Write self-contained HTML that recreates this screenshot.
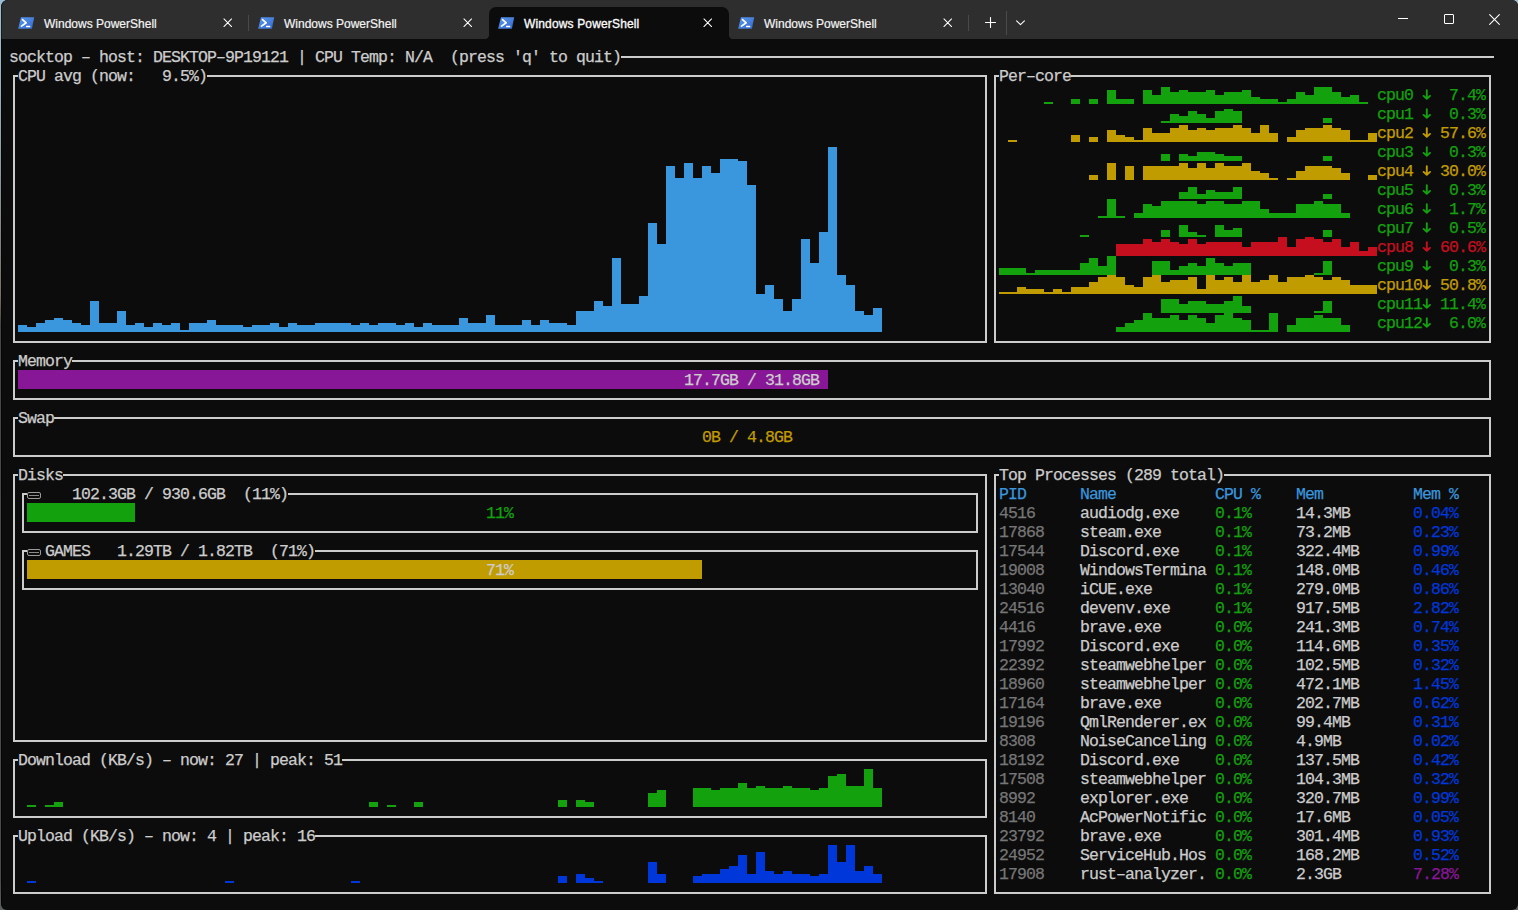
<!DOCTYPE html>
<html><head><meta charset="utf-8"><style>
html,body{margin:0;padding:0;width:1518px;height:910px;overflow:hidden;position:relative}
body{background:linear-gradient(#98bdd2 0,#96b8c9 60px,#8fa0a8 150px,#7a7068 295px,#4a4543 325px,#4a4a4a 500px,#4a4a4a 880px,#5a605e 910px)}
#win{position:absolute;left:1px;top:0;width:1517px;height:910px;background:#0c0c0c;border-radius:7px 6px 6px 6px;overflow:hidden;border-left:1px solid #050505;box-sizing:border-box}
#cornerTR{position:absolute;left:1508px;top:0;width:10px;height:10px;background:radial-gradient(circle at 0 100%, transparent 0, transparent 6px, #a3c3d3 6.5px)}
.t{position:absolute;font-family:"Liberation Mono",monospace;font-size:16.5px;letter-spacing:-0.9px;-webkit-text-stroke:0.25px currentColor;line-height:19px;white-space:pre;height:19px}
.r{position:absolute}
.b{position:absolute;border:2px solid #cccccc}
.ic{position:absolute}
.tt{position:absolute;top:16px;font-family:"Liberation Sans",sans-serif;font-size:12px;line-height:16px;color:#f4f4f4;white-space:pre;-webkit-text-stroke:0.2px #f4f4f4}
.dk{position:absolute;width:12px;height:5px;border:1px solid #9a9a9a;border-radius:2px}
.dk div{position:absolute;left:1px;top:2px;width:10px;height:1px;background:#8a8a8a}
#tabbar{position:absolute;left:0;top:0;width:1518px;height:39px}
#tabbg{position:absolute;left:1px;top:0;width:1517px;height:39px;background:#2e2e2e;border-radius:7px 6px 0 0;border-left:1px solid #1a1a1a;box-sizing:border-box}
#active{position:absolute;left:489px;top:7px;width:240px;height:32px;background:#0c0c0c;border-radius:7px 7px 0 0}
.sep{position:absolute;width:1px;background:#4a4a4a}
#edgeL{position:absolute;left:0;top:0;width:1px;height:910px;background:linear-gradient(#9bbccf,#8fa5b0 40%,#9a9a95 80%,#7a7a7a)}
</style></head><body>
<div id="win"></div>
<div id="tabbg"></div>
<div id="tabbar">
<div id="active"></div>
<div class="r" style="left:485px;top:35px;width:4px;height:4px;background:radial-gradient(circle at 0 0,#2e2e2e 3.6px,#0c0c0c 4.4px)"></div>
<div class="r" style="left:729px;top:35px;width:4px;height:4px;background:radial-gradient(circle at 100% 0,#2e2e2e 3.6px,#0c0c0c 4.4px)"></div>
<div class="sep" style="left:248px;top:15px;height:16px"></div>
<div class="sep" style="left:968px;top:15px;height:16px"></div>
<div class="sep" style="left:1006px;top:11px;height:24px"></div>
<svg class="ic" style="left:18px;top:17px" width="17" height="13" viewBox="0 0 17 13">
<defs><linearGradient id="g18" x1="0" y1="0" x2="1" y2="1"><stop offset="0" stop-color="#5b9af0"/><stop offset="1" stop-color="#3568cc"/></linearGradient></defs>
<path d="M3.0 0.2 H16.2 L13.9 11.8 H0.1 Z" fill="url(#g18)"/>
<path d="M4.5 2.7 L8.2 5.8 L3.5 9.1" stroke="#fff" stroke-width="1.7" fill="none" stroke-linecap="round" stroke-linejoin="round"/>
<rect x="8.0" y="8.7" width="4.3" height="1.5" rx="0.5" fill="#fff"/>
</svg>
<div class="tt" style="left:44px">Windows PowerShell</div>
<svg class="ic" style="left:223px;top:18px" width="9.5" height="9.5" viewBox="0 0 10 10"><path d="M1.0 1.0 L9.0 9.0 M9.0 1.0 L1.0 9.0" stroke="#ffffff" stroke-width="1.1" stroke-linecap="round"/></svg>
<svg class="ic" style="left:258px;top:17px" width="17" height="13" viewBox="0 0 17 13">
<defs><linearGradient id="g258" x1="0" y1="0" x2="1" y2="1"><stop offset="0" stop-color="#5b9af0"/><stop offset="1" stop-color="#3568cc"/></linearGradient></defs>
<path d="M3.0 0.2 H16.2 L13.9 11.8 H0.1 Z" fill="url(#g258)"/>
<path d="M4.5 2.7 L8.2 5.8 L3.5 9.1" stroke="#fff" stroke-width="1.7" fill="none" stroke-linecap="round" stroke-linejoin="round"/>
<rect x="8.0" y="8.7" width="4.3" height="1.5" rx="0.5" fill="#fff"/>
</svg>
<div class="tt" style="left:284px">Windows PowerShell</div>
<svg class="ic" style="left:463px;top:18px" width="9.5" height="9.5" viewBox="0 0 10 10"><path d="M1.0 1.0 L9.0 9.0 M9.0 1.0 L1.0 9.0" stroke="#ffffff" stroke-width="1.1" stroke-linecap="round"/></svg>
<svg class="ic" style="left:498px;top:17px" width="17" height="13" viewBox="0 0 17 13">
<defs><linearGradient id="g498" x1="0" y1="0" x2="1" y2="1"><stop offset="0" stop-color="#5b9af0"/><stop offset="1" stop-color="#3568cc"/></linearGradient></defs>
<path d="M3.0 0.2 H16.2 L13.9 11.8 H0.1 Z" fill="url(#g498)"/>
<path d="M4.5 2.7 L8.2 5.8 L3.5 9.1" stroke="#fff" stroke-width="1.7" fill="none" stroke-linecap="round" stroke-linejoin="round"/>
<rect x="8.0" y="8.7" width="4.3" height="1.5" rx="0.5" fill="#fff"/>
</svg>
<div class="tt" style="left:524px;-webkit-text-stroke:0.35px #fff;letter-spacing:0.15px">Windows PowerShell</div>
<svg class="ic" style="left:703px;top:18px" width="9.5" height="9.5" viewBox="0 0 10 10"><path d="M1.0 1.0 L9.0 9.0 M9.0 1.0 L1.0 9.0" stroke="#ffffff" stroke-width="1.1" stroke-linecap="round"/></svg>
<svg class="ic" style="left:738px;top:17px" width="17" height="13" viewBox="0 0 17 13">
<defs><linearGradient id="g738" x1="0" y1="0" x2="1" y2="1"><stop offset="0" stop-color="#5b9af0"/><stop offset="1" stop-color="#3568cc"/></linearGradient></defs>
<path d="M3.0 0.2 H16.2 L13.9 11.8 H0.1 Z" fill="url(#g738)"/>
<path d="M4.5 2.7 L8.2 5.8 L3.5 9.1" stroke="#fff" stroke-width="1.7" fill="none" stroke-linecap="round" stroke-linejoin="round"/>
<rect x="8.0" y="8.7" width="4.3" height="1.5" rx="0.5" fill="#fff"/>
</svg>
<div class="tt" style="left:764px">Windows PowerShell</div>
<svg class="ic" style="left:943px;top:18px" width="9.5" height="9.5" viewBox="0 0 10 10"><path d="M1.0 1.0 L9.0 9.0 M9.0 1.0 L1.0 9.0" stroke="#ffffff" stroke-width="1.1" stroke-linecap="round"/></svg>
<svg class="ic" style="left:985px;top:17px" width="11" height="11" viewBox="0 0 11 11"><path d="M5.5 0.5 V10.5 M0.5 5.5 H10.5" stroke="#fff" stroke-width="1.1" stroke-linecap="round"/></svg>
<svg class="ic" style="left:1016px;top:20px" width="9" height="6" viewBox="0 0 9 6"><path d="M0.6 0.8 L4.5 4.6 L8.4 0.8" stroke="#fff" stroke-width="1.1" fill="none" stroke-linecap="round" stroke-linejoin="round"/></svg>
<div class="r" style="left:1398px;top:18px;width:10px;height:1px;background:#fff"></div>
<div class="r" style="left:1444px;top:14px;width:8px;height:8px;border:1px solid #fff;border-radius:1px"></div>
<svg class="ic" style="left:1489px;top:14px" width="11" height="11" viewBox="0 0 10 10"><path d="M0.6 0.6 L9.4 9.4 M9.4 0.6 L0.6 9.4" stroke="#fff" stroke-width="1.0" stroke-linecap="round"/></svg>
</div>
<div id="term">
<div class="t" style="left:9px;top:48px;color:#cccccc">socktop – host: DESKTOP–9P19121 | CPU Temp: N/A  (press 'q' to quit)</div>
<div class="r" style="left:621px;top:56px;width:873px;height:2px;background:#cccccc"></div>
<div class="b" style="left:13px;top:75px;width:970px;height:264px"></div>
<div class="r" style="left:18px;top:325px;width:9px;height:7px;background:#3a96dd"></div>
<div class="r" style="left:27px;top:327px;width:9px;height:5px;background:#3a96dd"></div>
<div class="r" style="left:36px;top:323px;width:9px;height:9px;background:#3a96dd"></div>
<div class="r" style="left:45px;top:320px;width:9px;height:12px;background:#3a96dd"></div>
<div class="r" style="left:54px;top:318px;width:9px;height:14px;background:#3a96dd"></div>
<div class="r" style="left:63px;top:320px;width:9px;height:12px;background:#3a96dd"></div>
<div class="r" style="left:72px;top:323px;width:9px;height:9px;background:#3a96dd"></div>
<div class="r" style="left:81px;top:325px;width:9px;height:7px;background:#3a96dd"></div>
<div class="r" style="left:90px;top:301px;width:9px;height:31px;background:#3a96dd"></div>
<div class="r" style="left:99px;top:323px;width:9px;height:9px;background:#3a96dd"></div>
<div class="r" style="left:108px;top:323px;width:9px;height:9px;background:#3a96dd"></div>
<div class="r" style="left:117px;top:311px;width:9px;height:21px;background:#3a96dd"></div>
<div class="r" style="left:126px;top:325px;width:9px;height:7px;background:#3a96dd"></div>
<div class="r" style="left:135px;top:323px;width:9px;height:9px;background:#3a96dd"></div>
<div class="r" style="left:144px;top:327px;width:9px;height:5px;background:#3a96dd"></div>
<div class="r" style="left:153px;top:323px;width:9px;height:9px;background:#3a96dd"></div>
<div class="r" style="left:162px;top:325px;width:9px;height:7px;background:#3a96dd"></div>
<div class="r" style="left:171px;top:323px;width:9px;height:9px;background:#3a96dd"></div>
<div class="r" style="left:180px;top:330px;width:9px;height:2px;background:#3a96dd"></div>
<div class="r" style="left:189px;top:323px;width:9px;height:9px;background:#3a96dd"></div>
<div class="r" style="left:198px;top:323px;width:9px;height:9px;background:#3a96dd"></div>
<div class="r" style="left:207px;top:320px;width:9px;height:12px;background:#3a96dd"></div>
<div class="r" style="left:216px;top:325px;width:9px;height:7px;background:#3a96dd"></div>
<div class="r" style="left:225px;top:325px;width:9px;height:7px;background:#3a96dd"></div>
<div class="r" style="left:234px;top:325px;width:9px;height:7px;background:#3a96dd"></div>
<div class="r" style="left:243px;top:327px;width:9px;height:5px;background:#3a96dd"></div>
<div class="r" style="left:252px;top:325px;width:9px;height:7px;background:#3a96dd"></div>
<div class="r" style="left:261px;top:325px;width:9px;height:7px;background:#3a96dd"></div>
<div class="r" style="left:270px;top:323px;width:9px;height:9px;background:#3a96dd"></div>
<div class="r" style="left:279px;top:327px;width:9px;height:5px;background:#3a96dd"></div>
<div class="r" style="left:288px;top:323px;width:9px;height:9px;background:#3a96dd"></div>
<div class="r" style="left:297px;top:325px;width:9px;height:7px;background:#3a96dd"></div>
<div class="r" style="left:306px;top:325px;width:9px;height:7px;background:#3a96dd"></div>
<div class="r" style="left:315px;top:323px;width:9px;height:9px;background:#3a96dd"></div>
<div class="r" style="left:324px;top:323px;width:9px;height:9px;background:#3a96dd"></div>
<div class="r" style="left:333px;top:323px;width:9px;height:9px;background:#3a96dd"></div>
<div class="r" style="left:342px;top:323px;width:9px;height:9px;background:#3a96dd"></div>
<div class="r" style="left:351px;top:325px;width:9px;height:7px;background:#3a96dd"></div>
<div class="r" style="left:360px;top:323px;width:9px;height:9px;background:#3a96dd"></div>
<div class="r" style="left:369px;top:325px;width:9px;height:7px;background:#3a96dd"></div>
<div class="r" style="left:378px;top:323px;width:9px;height:9px;background:#3a96dd"></div>
<div class="r" style="left:387px;top:323px;width:9px;height:9px;background:#3a96dd"></div>
<div class="r" style="left:396px;top:325px;width:9px;height:7px;background:#3a96dd"></div>
<div class="r" style="left:405px;top:323px;width:9px;height:9px;background:#3a96dd"></div>
<div class="r" style="left:414px;top:327px;width:9px;height:5px;background:#3a96dd"></div>
<div class="r" style="left:423px;top:323px;width:9px;height:9px;background:#3a96dd"></div>
<div class="r" style="left:432px;top:325px;width:9px;height:7px;background:#3a96dd"></div>
<div class="r" style="left:441px;top:325px;width:9px;height:7px;background:#3a96dd"></div>
<div class="r" style="left:450px;top:325px;width:9px;height:7px;background:#3a96dd"></div>
<div class="r" style="left:459px;top:318px;width:9px;height:14px;background:#3a96dd"></div>
<div class="r" style="left:468px;top:323px;width:9px;height:9px;background:#3a96dd"></div>
<div class="r" style="left:477px;top:323px;width:9px;height:9px;background:#3a96dd"></div>
<div class="r" style="left:486px;top:315px;width:9px;height:17px;background:#3a96dd"></div>
<div class="r" style="left:495px;top:325px;width:9px;height:7px;background:#3a96dd"></div>
<div class="r" style="left:504px;top:325px;width:9px;height:7px;background:#3a96dd"></div>
<div class="r" style="left:513px;top:325px;width:9px;height:7px;background:#3a96dd"></div>
<div class="r" style="left:522px;top:320px;width:9px;height:12px;background:#3a96dd"></div>
<div class="r" style="left:531px;top:325px;width:9px;height:7px;background:#3a96dd"></div>
<div class="r" style="left:540px;top:320px;width:9px;height:12px;background:#3a96dd"></div>
<div class="r" style="left:549px;top:323px;width:9px;height:9px;background:#3a96dd"></div>
<div class="r" style="left:558px;top:323px;width:9px;height:9px;background:#3a96dd"></div>
<div class="r" style="left:567px;top:325px;width:9px;height:7px;background:#3a96dd"></div>
<div class="r" style="left:576px;top:311px;width:9px;height:21px;background:#3a96dd"></div>
<div class="r" style="left:585px;top:311px;width:9px;height:21px;background:#3a96dd"></div>
<div class="r" style="left:594px;top:301px;width:9px;height:31px;background:#3a96dd"></div>
<div class="r" style="left:603px;top:306px;width:9px;height:26px;background:#3a96dd"></div>
<div class="r" style="left:612px;top:258px;width:9px;height:74px;background:#3a96dd"></div>
<div class="r" style="left:621px;top:304px;width:9px;height:28px;background:#3a96dd"></div>
<div class="r" style="left:630px;top:304px;width:9px;height:28px;background:#3a96dd"></div>
<div class="r" style="left:639px;top:296px;width:9px;height:36px;background:#3a96dd"></div>
<div class="r" style="left:648px;top:223px;width:9px;height:109px;background:#3a96dd"></div>
<div class="r" style="left:657px;top:244px;width:9px;height:88px;background:#3a96dd"></div>
<div class="r" style="left:666px;top:166px;width:9px;height:166px;background:#3a96dd"></div>
<div class="r" style="left:675px;top:178px;width:9px;height:154px;background:#3a96dd"></div>
<div class="r" style="left:684px;top:163px;width:9px;height:169px;background:#3a96dd"></div>
<div class="r" style="left:693px;top:178px;width:9px;height:154px;background:#3a96dd"></div>
<div class="r" style="left:702px;top:166px;width:9px;height:166px;background:#3a96dd"></div>
<div class="r" style="left:711px;top:173px;width:9px;height:159px;background:#3a96dd"></div>
<div class="r" style="left:720px;top:159px;width:9px;height:173px;background:#3a96dd"></div>
<div class="r" style="left:729px;top:159px;width:9px;height:173px;background:#3a96dd"></div>
<div class="r" style="left:738px;top:161px;width:9px;height:171px;background:#3a96dd"></div>
<div class="r" style="left:747px;top:185px;width:9px;height:147px;background:#3a96dd"></div>
<div class="r" style="left:756px;top:294px;width:9px;height:38px;background:#3a96dd"></div>
<div class="r" style="left:765px;top:285px;width:9px;height:47px;background:#3a96dd"></div>
<div class="r" style="left:774px;top:299px;width:9px;height:33px;background:#3a96dd"></div>
<div class="r" style="left:783px;top:311px;width:9px;height:21px;background:#3a96dd"></div>
<div class="r" style="left:792px;top:299px;width:9px;height:33px;background:#3a96dd"></div>
<div class="r" style="left:801px;top:239px;width:9px;height:93px;background:#3a96dd"></div>
<div class="r" style="left:810px;top:263px;width:9px;height:69px;background:#3a96dd"></div>
<div class="r" style="left:819px;top:232px;width:9px;height:100px;background:#3a96dd"></div>
<div class="r" style="left:828px;top:147px;width:9px;height:185px;background:#3a96dd"></div>
<div class="r" style="left:837px;top:275px;width:9px;height:57px;background:#3a96dd"></div>
<div class="r" style="left:846px;top:285px;width:9px;height:47px;background:#3a96dd"></div>
<div class="r" style="left:855px;top:311px;width:9px;height:21px;background:#3a96dd"></div>
<div class="r" style="left:864px;top:315px;width:9px;height:17px;background:#3a96dd"></div>
<div class="r" style="left:873px;top:308px;width:9px;height:24px;background:#3a96dd"></div>
<div class="t" style="left:18px;top:66px;height:19px;color:#cccccc;background:#0c0c0c;padding-top:1px;box-sizing:border-box">CPU avg (now:   9.5%)</div>
<div class="b" style="left:994px;top:75px;width:493px;height:264px"></div>
<div class="t" style="left:999px;top:66px;height:19px;color:#cccccc;background:#0c0c0c;padding-top:1px;box-sizing:border-box">Per–core</div>
<div class="r" style="left:1044px;top:102px;width:9px;height:2px;background:#13a10e"></div>
<div class="r" style="left:1071px;top:99px;width:9px;height:5px;background:#13a10e"></div>
<div class="r" style="left:1089px;top:99px;width:9px;height:5px;background:#13a10e"></div>
<div class="r" style="left:1107px;top:90px;width:9px;height:14px;background:#13a10e"></div>
<div class="r" style="left:1116px;top:99px;width:9px;height:5px;background:#13a10e"></div>
<div class="r" style="left:1125px;top:99px;width:9px;height:5px;background:#13a10e"></div>
<div class="r" style="left:1143px;top:90px;width:9px;height:14px;background:#13a10e"></div>
<div class="r" style="left:1152px;top:95px;width:9px;height:9px;background:#13a10e"></div>
<div class="r" style="left:1161px;top:87px;width:9px;height:17px;background:#13a10e"></div>
<div class="r" style="left:1170px;top:92px;width:9px;height:12px;background:#13a10e"></div>
<div class="r" style="left:1179px;top:90px;width:9px;height:14px;background:#13a10e"></div>
<div class="r" style="left:1188px;top:92px;width:9px;height:12px;background:#13a10e"></div>
<div class="r" style="left:1197px;top:92px;width:9px;height:12px;background:#13a10e"></div>
<div class="r" style="left:1206px;top:90px;width:9px;height:14px;background:#13a10e"></div>
<div class="r" style="left:1215px;top:95px;width:9px;height:9px;background:#13a10e"></div>
<div class="r" style="left:1224px;top:92px;width:9px;height:12px;background:#13a10e"></div>
<div class="r" style="left:1233px;top:92px;width:9px;height:12px;background:#13a10e"></div>
<div class="r" style="left:1242px;top:90px;width:9px;height:14px;background:#13a10e"></div>
<div class="r" style="left:1251px;top:97px;width:9px;height:7px;background:#13a10e"></div>
<div class="r" style="left:1260px;top:99px;width:9px;height:5px;background:#13a10e"></div>
<div class="r" style="left:1269px;top:99px;width:9px;height:5px;background:#13a10e"></div>
<div class="r" style="left:1278px;top:102px;width:9px;height:2px;background:#13a10e"></div>
<div class="r" style="left:1287px;top:99px;width:9px;height:5px;background:#13a10e"></div>
<div class="r" style="left:1296px;top:92px;width:9px;height:12px;background:#13a10e"></div>
<div class="r" style="left:1305px;top:95px;width:9px;height:9px;background:#13a10e"></div>
<div class="r" style="left:1314px;top:87px;width:9px;height:17px;background:#13a10e"></div>
<div class="r" style="left:1323px;top:87px;width:9px;height:17px;background:#13a10e"></div>
<div class="r" style="left:1332px;top:92px;width:9px;height:12px;background:#13a10e"></div>
<div class="r" style="left:1341px;top:97px;width:9px;height:7px;background:#13a10e"></div>
<div class="r" style="left:1350px;top:95px;width:9px;height:9px;background:#13a10e"></div>
<div class="r" style="left:1359px;top:102px;width:9px;height:2px;background:#13a10e"></div>
<div class="t" style="left:1377px;top:86px;color:#13a10e">cpu0    7.4%</div>
<svg class="ic" style="left:1422px;top:85px" width="9" height="19" viewBox="0 0 9 19"><path d="M4.8 5.2 V13.4 M1.6 10.9 L4.8 13.8 L8.0 10.9" stroke="#13a10e" stroke-width="1.9" fill="none" stroke-linecap="round" stroke-linejoin="round"/></svg>
<div class="r" style="left:1161px;top:121px;width:9px;height:2px;background:#13a10e"></div>
<div class="r" style="left:1170px;top:114px;width:9px;height:9px;background:#13a10e"></div>
<div class="r" style="left:1179px;top:116px;width:9px;height:7px;background:#13a10e"></div>
<div class="r" style="left:1188px;top:111px;width:9px;height:12px;background:#13a10e"></div>
<div class="r" style="left:1197px;top:114px;width:9px;height:9px;background:#13a10e"></div>
<div class="r" style="left:1206px;top:118px;width:9px;height:5px;background:#13a10e"></div>
<div class="r" style="left:1215px;top:111px;width:9px;height:12px;background:#13a10e"></div>
<div class="r" style="left:1224px;top:109px;width:9px;height:14px;background:#13a10e"></div>
<div class="r" style="left:1233px;top:111px;width:9px;height:12px;background:#13a10e"></div>
<div class="r" style="left:1323px;top:118px;width:9px;height:5px;background:#13a10e"></div>
<div class="t" style="left:1377px;top:105px;color:#13a10e">cpu1    0.3%</div>
<svg class="ic" style="left:1422px;top:104px" width="9" height="19" viewBox="0 0 9 19"><path d="M4.8 5.2 V13.4 M1.6 10.9 L4.8 13.8 L8.0 10.9" stroke="#13a10e" stroke-width="1.9" fill="none" stroke-linecap="round" stroke-linejoin="round"/></svg>
<div class="r" style="left:1008px;top:140px;width:9px;height:2px;background:#c19c00"></div>
<div class="r" style="left:1071px;top:135px;width:9px;height:7px;background:#c19c00"></div>
<div class="r" style="left:1089px;top:137px;width:9px;height:5px;background:#c19c00"></div>
<div class="r" style="left:1107px;top:130px;width:9px;height:12px;background:#c19c00"></div>
<div class="r" style="left:1116px;top:135px;width:9px;height:7px;background:#c19c00"></div>
<div class="r" style="left:1125px;top:137px;width:9px;height:5px;background:#c19c00"></div>
<div class="r" style="left:1134px;top:140px;width:9px;height:2px;background:#c19c00"></div>
<div class="r" style="left:1143px;top:128px;width:9px;height:14px;background:#c19c00"></div>
<div class="r" style="left:1152px;top:133px;width:9px;height:9px;background:#c19c00"></div>
<div class="r" style="left:1161px;top:133px;width:9px;height:9px;background:#c19c00"></div>
<div class="r" style="left:1170px;top:128px;width:9px;height:14px;background:#c19c00"></div>
<div class="r" style="left:1179px;top:125px;width:9px;height:17px;background:#c19c00"></div>
<div class="r" style="left:1188px;top:130px;width:9px;height:12px;background:#c19c00"></div>
<div class="r" style="left:1197px;top:128px;width:9px;height:14px;background:#c19c00"></div>
<div class="r" style="left:1206px;top:130px;width:9px;height:12px;background:#c19c00"></div>
<div class="r" style="left:1215px;top:128px;width:9px;height:14px;background:#c19c00"></div>
<div class="r" style="left:1224px;top:128px;width:9px;height:14px;background:#c19c00"></div>
<div class="r" style="left:1233px;top:125px;width:9px;height:17px;background:#c19c00"></div>
<div class="r" style="left:1242px;top:128px;width:9px;height:14px;background:#c19c00"></div>
<div class="r" style="left:1251px;top:133px;width:9px;height:9px;background:#c19c00"></div>
<div class="r" style="left:1260px;top:125px;width:9px;height:17px;background:#c19c00"></div>
<div class="r" style="left:1269px;top:133px;width:9px;height:9px;background:#c19c00"></div>
<div class="r" style="left:1287px;top:137px;width:9px;height:5px;background:#c19c00"></div>
<div class="r" style="left:1296px;top:130px;width:9px;height:12px;background:#c19c00"></div>
<div class="r" style="left:1305px;top:128px;width:9px;height:14px;background:#c19c00"></div>
<div class="r" style="left:1314px;top:128px;width:9px;height:14px;background:#c19c00"></div>
<div class="r" style="left:1323px;top:125px;width:9px;height:17px;background:#c19c00"></div>
<div class="r" style="left:1332px;top:128px;width:9px;height:14px;background:#c19c00"></div>
<div class="r" style="left:1341px;top:130px;width:9px;height:12px;background:#c19c00"></div>
<div class="r" style="left:1350px;top:140px;width:9px;height:2px;background:#c19c00"></div>
<div class="r" style="left:1359px;top:140px;width:9px;height:2px;background:#c19c00"></div>
<div class="r" style="left:1368px;top:133px;width:9px;height:9px;background:#c19c00"></div>
<div class="t" style="left:1377px;top:124px;color:#c19c00">cpu2   57.6%</div>
<svg class="ic" style="left:1422px;top:123px" width="9" height="19" viewBox="0 0 9 19"><path d="M4.8 5.2 V13.4 M1.6 10.9 L4.8 13.8 L8.0 10.9" stroke="#c19c00" stroke-width="1.9" fill="none" stroke-linecap="round" stroke-linejoin="round"/></svg>
<div class="r" style="left:1161px;top:154px;width:9px;height:7px;background:#13a10e"></div>
<div class="r" style="left:1179px;top:154px;width:9px;height:7px;background:#13a10e"></div>
<div class="r" style="left:1188px;top:156px;width:9px;height:5px;background:#13a10e"></div>
<div class="r" style="left:1197px;top:152px;width:9px;height:9px;background:#13a10e"></div>
<div class="r" style="left:1206px;top:152px;width:9px;height:9px;background:#13a10e"></div>
<div class="r" style="left:1215px;top:154px;width:9px;height:7px;background:#13a10e"></div>
<div class="r" style="left:1224px;top:156px;width:9px;height:5px;background:#13a10e"></div>
<div class="r" style="left:1233px;top:156px;width:9px;height:5px;background:#13a10e"></div>
<div class="r" style="left:1323px;top:156px;width:9px;height:5px;background:#13a10e"></div>
<div class="t" style="left:1377px;top:143px;color:#13a10e">cpu3    0.3%</div>
<svg class="ic" style="left:1422px;top:142px" width="9" height="19" viewBox="0 0 9 19"><path d="M4.8 5.2 V13.4 M1.6 10.9 L4.8 13.8 L8.0 10.9" stroke="#13a10e" stroke-width="1.9" fill="none" stroke-linecap="round" stroke-linejoin="round"/></svg>
<div class="r" style="left:1089px;top:175px;width:9px;height:5px;background:#c19c00"></div>
<div class="r" style="left:1107px;top:163px;width:9px;height:17px;background:#c19c00"></div>
<div class="r" style="left:1125px;top:166px;width:9px;height:14px;background:#c19c00"></div>
<div class="r" style="left:1143px;top:166px;width:9px;height:14px;background:#c19c00"></div>
<div class="r" style="left:1152px;top:166px;width:9px;height:14px;background:#c19c00"></div>
<div class="r" style="left:1161px;top:166px;width:9px;height:14px;background:#c19c00"></div>
<div class="r" style="left:1170px;top:166px;width:9px;height:14px;background:#c19c00"></div>
<div class="r" style="left:1179px;top:163px;width:9px;height:17px;background:#c19c00"></div>
<div class="r" style="left:1188px;top:168px;width:9px;height:12px;background:#c19c00"></div>
<div class="r" style="left:1197px;top:163px;width:9px;height:17px;background:#c19c00"></div>
<div class="r" style="left:1206px;top:168px;width:9px;height:12px;background:#c19c00"></div>
<div class="r" style="left:1215px;top:163px;width:9px;height:17px;background:#c19c00"></div>
<div class="r" style="left:1224px;top:166px;width:9px;height:14px;background:#c19c00"></div>
<div class="r" style="left:1233px;top:166px;width:9px;height:14px;background:#c19c00"></div>
<div class="r" style="left:1242px;top:163px;width:9px;height:17px;background:#c19c00"></div>
<div class="r" style="left:1251px;top:171px;width:9px;height:9px;background:#c19c00"></div>
<div class="r" style="left:1260px;top:173px;width:9px;height:7px;background:#c19c00"></div>
<div class="r" style="left:1269px;top:178px;width:9px;height:2px;background:#c19c00"></div>
<div class="r" style="left:1287px;top:178px;width:9px;height:2px;background:#c19c00"></div>
<div class="r" style="left:1296px;top:171px;width:9px;height:9px;background:#c19c00"></div>
<div class="r" style="left:1305px;top:166px;width:9px;height:14px;background:#c19c00"></div>
<div class="r" style="left:1314px;top:166px;width:9px;height:14px;background:#c19c00"></div>
<div class="r" style="left:1323px;top:166px;width:9px;height:14px;background:#c19c00"></div>
<div class="r" style="left:1332px;top:168px;width:9px;height:12px;background:#c19c00"></div>
<div class="r" style="left:1341px;top:173px;width:9px;height:7px;background:#c19c00"></div>
<div class="r" style="left:1368px;top:175px;width:9px;height:5px;background:#c19c00"></div>
<div class="t" style="left:1377px;top:162px;color:#c19c00">cpu4   30.0%</div>
<svg class="ic" style="left:1422px;top:161px" width="9" height="19" viewBox="0 0 9 19"><path d="M4.8 5.2 V13.4 M1.6 10.9 L4.8 13.8 L8.0 10.9" stroke="#c19c00" stroke-width="1.9" fill="none" stroke-linecap="round" stroke-linejoin="round"/></svg>
<div class="r" style="left:1179px;top:192px;width:9px;height:7px;background:#13a10e"></div>
<div class="r" style="left:1188px;top:187px;width:9px;height:12px;background:#13a10e"></div>
<div class="r" style="left:1197px;top:194px;width:9px;height:5px;background:#13a10e"></div>
<div class="r" style="left:1206px;top:190px;width:9px;height:9px;background:#13a10e"></div>
<div class="r" style="left:1215px;top:192px;width:9px;height:7px;background:#13a10e"></div>
<div class="r" style="left:1224px;top:192px;width:9px;height:7px;background:#13a10e"></div>
<div class="r" style="left:1233px;top:187px;width:9px;height:12px;background:#13a10e"></div>
<div class="r" style="left:1323px;top:194px;width:9px;height:5px;background:#13a10e"></div>
<div class="t" style="left:1377px;top:181px;color:#13a10e">cpu5    0.3%</div>
<svg class="ic" style="left:1422px;top:180px" width="9" height="19" viewBox="0 0 9 19"><path d="M4.8 5.2 V13.4 M1.6 10.9 L4.8 13.8 L8.0 10.9" stroke="#13a10e" stroke-width="1.9" fill="none" stroke-linecap="round" stroke-linejoin="round"/></svg>
<div class="r" style="left:1098px;top:216px;width:9px;height:2px;background:#13a10e"></div>
<div class="r" style="left:1107px;top:199px;width:9px;height:19px;background:#13a10e"></div>
<div class="r" style="left:1116px;top:216px;width:9px;height:2px;background:#13a10e"></div>
<div class="r" style="left:1134px;top:213px;width:9px;height:5px;background:#13a10e"></div>
<div class="r" style="left:1143px;top:204px;width:9px;height:14px;background:#13a10e"></div>
<div class="r" style="left:1152px;top:206px;width:9px;height:12px;background:#13a10e"></div>
<div class="r" style="left:1161px;top:201px;width:9px;height:17px;background:#13a10e"></div>
<div class="r" style="left:1170px;top:201px;width:9px;height:17px;background:#13a10e"></div>
<div class="r" style="left:1179px;top:201px;width:9px;height:17px;background:#13a10e"></div>
<div class="r" style="left:1188px;top:201px;width:9px;height:17px;background:#13a10e"></div>
<div class="r" style="left:1197px;top:204px;width:9px;height:14px;background:#13a10e"></div>
<div class="r" style="left:1206px;top:201px;width:9px;height:17px;background:#13a10e"></div>
<div class="r" style="left:1215px;top:201px;width:9px;height:17px;background:#13a10e"></div>
<div class="r" style="left:1224px;top:204px;width:9px;height:14px;background:#13a10e"></div>
<div class="r" style="left:1233px;top:204px;width:9px;height:14px;background:#13a10e"></div>
<div class="r" style="left:1242px;top:201px;width:9px;height:17px;background:#13a10e"></div>
<div class="r" style="left:1251px;top:201px;width:9px;height:17px;background:#13a10e"></div>
<div class="r" style="left:1260px;top:209px;width:9px;height:9px;background:#13a10e"></div>
<div class="r" style="left:1269px;top:213px;width:9px;height:5px;background:#13a10e"></div>
<div class="r" style="left:1278px;top:213px;width:9px;height:5px;background:#13a10e"></div>
<div class="r" style="left:1287px;top:213px;width:9px;height:5px;background:#13a10e"></div>
<div class="r" style="left:1296px;top:204px;width:9px;height:14px;background:#13a10e"></div>
<div class="r" style="left:1305px;top:204px;width:9px;height:14px;background:#13a10e"></div>
<div class="r" style="left:1314px;top:201px;width:9px;height:17px;background:#13a10e"></div>
<div class="r" style="left:1323px;top:204px;width:9px;height:14px;background:#13a10e"></div>
<div class="r" style="left:1332px;top:204px;width:9px;height:14px;background:#13a10e"></div>
<div class="r" style="left:1341px;top:213px;width:9px;height:5px;background:#13a10e"></div>
<div class="t" style="left:1377px;top:200px;color:#13a10e">cpu6    1.7%</div>
<svg class="ic" style="left:1422px;top:199px" width="9" height="19" viewBox="0 0 9 19"><path d="M4.8 5.2 V13.4 M1.6 10.9 L4.8 13.8 L8.0 10.9" stroke="#13a10e" stroke-width="1.9" fill="none" stroke-linecap="round" stroke-linejoin="round"/></svg>
<div class="r" style="left:1080px;top:235px;width:9px;height:2px;background:#13a10e"></div>
<div class="r" style="left:1161px;top:230px;width:9px;height:7px;background:#13a10e"></div>
<div class="r" style="left:1179px;top:225px;width:9px;height:12px;background:#13a10e"></div>
<div class="r" style="left:1188px;top:232px;width:9px;height:5px;background:#13a10e"></div>
<div class="r" style="left:1197px;top:235px;width:9px;height:2px;background:#13a10e"></div>
<div class="r" style="left:1215px;top:225px;width:9px;height:12px;background:#13a10e"></div>
<div class="r" style="left:1224px;top:230px;width:9px;height:7px;background:#13a10e"></div>
<div class="r" style="left:1233px;top:228px;width:9px;height:9px;background:#13a10e"></div>
<div class="r" style="left:1323px;top:230px;width:9px;height:7px;background:#13a10e"></div>
<div class="t" style="left:1377px;top:219px;color:#13a10e">cpu7    0.5%</div>
<svg class="ic" style="left:1422px;top:218px" width="9" height="19" viewBox="0 0 9 19"><path d="M4.8 5.2 V13.4 M1.6 10.9 L4.8 13.8 L8.0 10.9" stroke="#13a10e" stroke-width="1.9" fill="none" stroke-linecap="round" stroke-linejoin="round"/></svg>
<div class="r" style="left:1116px;top:244px;width:9px;height:12px;background:#c50f1f"></div>
<div class="r" style="left:1125px;top:244px;width:9px;height:12px;background:#c50f1f"></div>
<div class="r" style="left:1134px;top:244px;width:9px;height:12px;background:#c50f1f"></div>
<div class="r" style="left:1143px;top:239px;width:9px;height:17px;background:#c50f1f"></div>
<div class="r" style="left:1152px;top:242px;width:9px;height:14px;background:#c50f1f"></div>
<div class="r" style="left:1161px;top:239px;width:9px;height:17px;background:#c50f1f"></div>
<div class="r" style="left:1170px;top:242px;width:9px;height:14px;background:#c50f1f"></div>
<div class="r" style="left:1179px;top:244px;width:9px;height:12px;background:#c50f1f"></div>
<div class="r" style="left:1188px;top:239px;width:9px;height:17px;background:#c50f1f"></div>
<div class="r" style="left:1197px;top:244px;width:9px;height:12px;background:#c50f1f"></div>
<div class="r" style="left:1206px;top:242px;width:9px;height:14px;background:#c50f1f"></div>
<div class="r" style="left:1215px;top:242px;width:9px;height:14px;background:#c50f1f"></div>
<div class="r" style="left:1224px;top:242px;width:9px;height:14px;background:#c50f1f"></div>
<div class="r" style="left:1233px;top:242px;width:9px;height:14px;background:#c50f1f"></div>
<div class="r" style="left:1242px;top:247px;width:9px;height:9px;background:#c50f1f"></div>
<div class="r" style="left:1251px;top:242px;width:9px;height:14px;background:#c50f1f"></div>
<div class="r" style="left:1260px;top:242px;width:9px;height:14px;background:#c50f1f"></div>
<div class="r" style="left:1269px;top:242px;width:9px;height:14px;background:#c50f1f"></div>
<div class="r" style="left:1278px;top:237px;width:9px;height:19px;background:#c50f1f"></div>
<div class="r" style="left:1287px;top:247px;width:9px;height:9px;background:#c50f1f"></div>
<div class="r" style="left:1296px;top:239px;width:9px;height:17px;background:#c50f1f"></div>
<div class="r" style="left:1305px;top:237px;width:9px;height:19px;background:#c50f1f"></div>
<div class="r" style="left:1314px;top:239px;width:9px;height:17px;background:#c50f1f"></div>
<div class="r" style="left:1323px;top:242px;width:9px;height:14px;background:#c50f1f"></div>
<div class="r" style="left:1332px;top:239px;width:9px;height:17px;background:#c50f1f"></div>
<div class="r" style="left:1341px;top:247px;width:9px;height:9px;background:#c50f1f"></div>
<div class="r" style="left:1350px;top:242px;width:9px;height:14px;background:#c50f1f"></div>
<div class="r" style="left:1359px;top:251px;width:9px;height:5px;background:#c50f1f"></div>
<div class="r" style="left:1368px;top:247px;width:9px;height:9px;background:#c50f1f"></div>
<div class="t" style="left:1377px;top:238px;color:#c50f1f">cpu8   60.6%</div>
<svg class="ic" style="left:1422px;top:237px" width="9" height="19" viewBox="0 0 9 19"><path d="M4.8 5.2 V13.4 M1.6 10.9 L4.8 13.8 L8.0 10.9" stroke="#c50f1f" stroke-width="1.9" fill="none" stroke-linecap="round" stroke-linejoin="round"/></svg>
<div class="r" style="left:999px;top:268px;width:9px;height:7px;background:#13a10e"></div>
<div class="r" style="left:1008px;top:268px;width:9px;height:7px;background:#13a10e"></div>
<div class="r" style="left:1017px;top:268px;width:9px;height:7px;background:#13a10e"></div>
<div class="r" style="left:1026px;top:273px;width:9px;height:2px;background:#13a10e"></div>
<div class="r" style="left:1035px;top:270px;width:9px;height:5px;background:#13a10e"></div>
<div class="r" style="left:1044px;top:270px;width:9px;height:5px;background:#13a10e"></div>
<div class="r" style="left:1053px;top:270px;width:9px;height:5px;background:#13a10e"></div>
<div class="r" style="left:1062px;top:270px;width:9px;height:5px;background:#13a10e"></div>
<div class="r" style="left:1071px;top:270px;width:9px;height:5px;background:#13a10e"></div>
<div class="r" style="left:1080px;top:263px;width:9px;height:12px;background:#13a10e"></div>
<div class="r" style="left:1089px;top:258px;width:9px;height:17px;background:#13a10e"></div>
<div class="r" style="left:1098px;top:266px;width:9px;height:9px;background:#13a10e"></div>
<div class="r" style="left:1107px;top:256px;width:9px;height:19px;background:#13a10e"></div>
<div class="r" style="left:1152px;top:261px;width:9px;height:14px;background:#13a10e"></div>
<div class="r" style="left:1161px;top:261px;width:9px;height:14px;background:#13a10e"></div>
<div class="r" style="left:1170px;top:270px;width:9px;height:5px;background:#13a10e"></div>
<div class="r" style="left:1179px;top:266px;width:9px;height:9px;background:#13a10e"></div>
<div class="r" style="left:1188px;top:263px;width:9px;height:12px;background:#13a10e"></div>
<div class="r" style="left:1197px;top:266px;width:9px;height:9px;background:#13a10e"></div>
<div class="r" style="left:1206px;top:258px;width:9px;height:17px;background:#13a10e"></div>
<div class="r" style="left:1215px;top:263px;width:9px;height:12px;background:#13a10e"></div>
<div class="r" style="left:1224px;top:266px;width:9px;height:9px;background:#13a10e"></div>
<div class="r" style="left:1233px;top:263px;width:9px;height:12px;background:#13a10e"></div>
<div class="r" style="left:1242px;top:263px;width:9px;height:12px;background:#13a10e"></div>
<div class="r" style="left:1314px;top:273px;width:9px;height:2px;background:#13a10e"></div>
<div class="r" style="left:1323px;top:261px;width:9px;height:14px;background:#13a10e"></div>
<div class="t" style="left:1377px;top:257px;color:#13a10e">cpu9    0.3%</div>
<svg class="ic" style="left:1422px;top:256px" width="9" height="19" viewBox="0 0 9 19"><path d="M4.8 5.2 V13.4 M1.6 10.9 L4.8 13.8 L8.0 10.9" stroke="#13a10e" stroke-width="1.9" fill="none" stroke-linecap="round" stroke-linejoin="round"/></svg>
<div class="r" style="left:999px;top:292px;width:9px;height:2px;background:#c19c00"></div>
<div class="r" style="left:1008px;top:292px;width:9px;height:2px;background:#c19c00"></div>
<div class="r" style="left:1017px;top:287px;width:9px;height:7px;background:#c19c00"></div>
<div class="r" style="left:1026px;top:289px;width:9px;height:5px;background:#c19c00"></div>
<div class="r" style="left:1035px;top:289px;width:9px;height:5px;background:#c19c00"></div>
<div class="r" style="left:1044px;top:292px;width:9px;height:2px;background:#c19c00"></div>
<div class="r" style="left:1053px;top:289px;width:9px;height:5px;background:#c19c00"></div>
<div class="r" style="left:1062px;top:292px;width:9px;height:2px;background:#c19c00"></div>
<div class="r" style="left:1071px;top:287px;width:9px;height:7px;background:#c19c00"></div>
<div class="r" style="left:1080px;top:287px;width:9px;height:7px;background:#c19c00"></div>
<div class="r" style="left:1089px;top:282px;width:9px;height:12px;background:#c19c00"></div>
<div class="r" style="left:1098px;top:277px;width:9px;height:17px;background:#c19c00"></div>
<div class="r" style="left:1107px;top:275px;width:9px;height:19px;background:#c19c00"></div>
<div class="r" style="left:1116px;top:277px;width:9px;height:17px;background:#c19c00"></div>
<div class="r" style="left:1125px;top:285px;width:9px;height:9px;background:#c19c00"></div>
<div class="r" style="left:1134px;top:287px;width:9px;height:7px;background:#c19c00"></div>
<div class="r" style="left:1143px;top:277px;width:9px;height:17px;background:#c19c00"></div>
<div class="r" style="left:1152px;top:275px;width:9px;height:19px;background:#c19c00"></div>
<div class="r" style="left:1161px;top:282px;width:9px;height:12px;background:#c19c00"></div>
<div class="r" style="left:1170px;top:280px;width:9px;height:14px;background:#c19c00"></div>
<div class="r" style="left:1179px;top:280px;width:9px;height:14px;background:#c19c00"></div>
<div class="r" style="left:1188px;top:277px;width:9px;height:17px;background:#c19c00"></div>
<div class="r" style="left:1197px;top:289px;width:9px;height:5px;background:#c19c00"></div>
<div class="r" style="left:1206px;top:275px;width:9px;height:19px;background:#c19c00"></div>
<div class="r" style="left:1215px;top:280px;width:9px;height:14px;background:#c19c00"></div>
<div class="r" style="left:1224px;top:277px;width:9px;height:17px;background:#c19c00"></div>
<div class="r" style="left:1233px;top:282px;width:9px;height:12px;background:#c19c00"></div>
<div class="r" style="left:1242px;top:275px;width:9px;height:19px;background:#c19c00"></div>
<div class="r" style="left:1251px;top:282px;width:9px;height:12px;background:#c19c00"></div>
<div class="r" style="left:1260px;top:280px;width:9px;height:14px;background:#c19c00"></div>
<div class="r" style="left:1269px;top:275px;width:9px;height:19px;background:#c19c00"></div>
<div class="r" style="left:1278px;top:282px;width:9px;height:12px;background:#c19c00"></div>
<div class="r" style="left:1287px;top:277px;width:9px;height:17px;background:#c19c00"></div>
<div class="r" style="left:1296px;top:277px;width:9px;height:17px;background:#c19c00"></div>
<div class="r" style="left:1305px;top:275px;width:9px;height:19px;background:#c19c00"></div>
<div class="r" style="left:1314px;top:277px;width:9px;height:17px;background:#c19c00"></div>
<div class="r" style="left:1323px;top:280px;width:9px;height:14px;background:#c19c00"></div>
<div class="r" style="left:1332px;top:277px;width:9px;height:17px;background:#c19c00"></div>
<div class="r" style="left:1341px;top:280px;width:9px;height:14px;background:#c19c00"></div>
<div class="r" style="left:1350px;top:285px;width:9px;height:9px;background:#c19c00"></div>
<div class="r" style="left:1359px;top:285px;width:9px;height:9px;background:#c19c00"></div>
<div class="r" style="left:1368px;top:285px;width:9px;height:9px;background:#c19c00"></div>
<div class="t" style="left:1377px;top:276px;color:#c19c00">cpu10  50.8%</div>
<svg class="ic" style="left:1422px;top:275px" width="9" height="19" viewBox="0 0 9 19"><path d="M4.8 5.2 V13.4 M1.6 10.9 L4.8 13.8 L8.0 10.9" stroke="#c19c00" stroke-width="1.9" fill="none" stroke-linecap="round" stroke-linejoin="round"/></svg>
<div class="r" style="left:1161px;top:299px;width:9px;height:14px;background:#13a10e"></div>
<div class="r" style="left:1170px;top:299px;width:9px;height:14px;background:#13a10e"></div>
<div class="r" style="left:1179px;top:304px;width:9px;height:9px;background:#13a10e"></div>
<div class="r" style="left:1188px;top:301px;width:9px;height:12px;background:#13a10e"></div>
<div class="r" style="left:1197px;top:301px;width:9px;height:12px;background:#13a10e"></div>
<div class="r" style="left:1206px;top:304px;width:9px;height:9px;background:#13a10e"></div>
<div class="r" style="left:1215px;top:304px;width:9px;height:9px;background:#13a10e"></div>
<div class="r" style="left:1224px;top:301px;width:9px;height:12px;background:#13a10e"></div>
<div class="r" style="left:1233px;top:296px;width:9px;height:17px;background:#13a10e"></div>
<div class="r" style="left:1242px;top:306px;width:9px;height:7px;background:#13a10e"></div>
<div class="r" style="left:1314px;top:311px;width:9px;height:2px;background:#13a10e"></div>
<div class="r" style="left:1323px;top:301px;width:9px;height:12px;background:#13a10e"></div>
<div class="t" style="left:1377px;top:295px;color:#13a10e">cpu11  11.4%</div>
<svg class="ic" style="left:1422px;top:294px" width="9" height="19" viewBox="0 0 9 19"><path d="M4.8 5.2 V13.4 M1.6 10.9 L4.8 13.8 L8.0 10.9" stroke="#13a10e" stroke-width="1.9" fill="none" stroke-linecap="round" stroke-linejoin="round"/></svg>
<div class="r" style="left:1116px;top:327px;width:9px;height:5px;background:#13a10e"></div>
<div class="r" style="left:1125px;top:323px;width:9px;height:9px;background:#13a10e"></div>
<div class="r" style="left:1134px;top:320px;width:9px;height:12px;background:#13a10e"></div>
<div class="r" style="left:1143px;top:313px;width:9px;height:19px;background:#13a10e"></div>
<div class="r" style="left:1152px;top:318px;width:9px;height:14px;background:#13a10e"></div>
<div class="r" style="left:1161px;top:318px;width:9px;height:14px;background:#13a10e"></div>
<div class="r" style="left:1170px;top:315px;width:9px;height:17px;background:#13a10e"></div>
<div class="r" style="left:1179px;top:320px;width:9px;height:12px;background:#13a10e"></div>
<div class="r" style="left:1188px;top:315px;width:9px;height:17px;background:#13a10e"></div>
<div class="r" style="left:1197px;top:318px;width:9px;height:14px;background:#13a10e"></div>
<div class="r" style="left:1206px;top:323px;width:9px;height:9px;background:#13a10e"></div>
<div class="r" style="left:1215px;top:315px;width:9px;height:17px;background:#13a10e"></div>
<div class="r" style="left:1224px;top:313px;width:9px;height:19px;background:#13a10e"></div>
<div class="r" style="left:1233px;top:318px;width:9px;height:14px;background:#13a10e"></div>
<div class="r" style="left:1242px;top:320px;width:9px;height:12px;background:#13a10e"></div>
<div class="r" style="left:1251px;top:330px;width:9px;height:2px;background:#13a10e"></div>
<div class="r" style="left:1260px;top:330px;width:9px;height:2px;background:#13a10e"></div>
<div class="r" style="left:1269px;top:313px;width:9px;height:19px;background:#13a10e"></div>
<div class="r" style="left:1287px;top:325px;width:9px;height:7px;background:#13a10e"></div>
<div class="r" style="left:1296px;top:318px;width:9px;height:14px;background:#13a10e"></div>
<div class="r" style="left:1305px;top:318px;width:9px;height:14px;background:#13a10e"></div>
<div class="r" style="left:1314px;top:315px;width:9px;height:17px;background:#13a10e"></div>
<div class="r" style="left:1323px;top:318px;width:9px;height:14px;background:#13a10e"></div>
<div class="r" style="left:1332px;top:318px;width:9px;height:14px;background:#13a10e"></div>
<div class="r" style="left:1341px;top:325px;width:9px;height:7px;background:#13a10e"></div>
<div class="t" style="left:1377px;top:314px;color:#13a10e">cpu12   6.0%</div>
<svg class="ic" style="left:1422px;top:313px" width="9" height="19" viewBox="0 0 9 19"><path d="M4.8 5.2 V13.4 M1.6 10.9 L4.8 13.8 L8.0 10.9" stroke="#13a10e" stroke-width="1.9" fill="none" stroke-linecap="round" stroke-linejoin="round"/></svg>
<div class="b" style="left:13px;top:360px;width:1474px;height:36px"></div>
<div class="t" style="left:18px;top:351px;height:19px;color:#cccccc;background:#0c0c0c;padding-top:1px;box-sizing:border-box">Memory</div>
<div class="r" style="left:18px;top:370px;width:810px;height:19px;background:#881798"></div>
<div class="t" style="left:684px;top:371px;color:#cccccc">17.7GB / 31.8GB</div>
<div class="b" style="left:13px;top:417px;width:1474px;height:36px"></div>
<div class="t" style="left:18px;top:408px;height:19px;color:#cccccc;background:#0c0c0c;padding-top:1px;box-sizing:border-box">Swap</div>
<div class="t" style="left:702px;top:428px;color:#c19c00">0B / 4.8GB</div>
<div class="b" style="left:13px;top:474px;width:970px;height:264px"></div>
<div class="t" style="left:18px;top:465px;height:19px;color:#cccccc;background:#0c0c0c;padding-top:1px;box-sizing:border-box">Disks</div>
<div class="b" style="left:22px;top:493px;width:952px;height:36px"></div>
<div class="t" style="left:27px;top:484px;height:19px;color:#cccccc;background:#0c0c0c;padding-top:1px;box-sizing:border-box">     102.3GB / 930.6GB  (11%)</div>
<div class="r" style="left:27px;top:503px;width:108px;height:19px;background:#13a10e"></div>
<div class="t" style="left:486px;top:504px;color:#13a10e">11%</div>
<div class="b" style="left:22px;top:550px;width:952px;height:36px"></div>
<div class="t" style="left:27px;top:541px;height:19px;color:#cccccc;background:#0c0c0c;padding-top:1px;box-sizing:border-box">  GAMES   1.29TB / 1.82TB  (71%)</div>
<div class="r" style="left:27px;top:560px;width:675px;height:19px;background:#c19c00"></div>
<div class="t" style="left:486px;top:561px;color:#cccccc">71%</div>
<div class="dk" style="left:27px;top:492px"><div></div></div>
<div class="dk" style="left:27px;top:549px"><div></div></div>
<div class="b" style="left:13px;top:759px;width:970px;height:55px"></div>
<div class="t" style="left:18px;top:750px;height:19px;color:#cccccc;background:#0c0c0c;padding-top:1px;box-sizing:border-box">Download (KB/s) – now: 27 | peak: 51</div>
<div class="r" style="left:27px;top:805px;width:9px;height:2px;background:#13a10e"></div>
<div class="r" style="left:45px;top:805px;width:9px;height:2px;background:#13a10e"></div>
<div class="r" style="left:54px;top:802px;width:9px;height:5px;background:#13a10e"></div>
<div class="r" style="left:369px;top:802px;width:9px;height:5px;background:#13a10e"></div>
<div class="r" style="left:387px;top:805px;width:9px;height:2px;background:#13a10e"></div>
<div class="r" style="left:414px;top:802px;width:9px;height:5px;background:#13a10e"></div>
<div class="r" style="left:558px;top:800px;width:9px;height:7px;background:#13a10e"></div>
<div class="r" style="left:576px;top:800px;width:9px;height:7px;background:#13a10e"></div>
<div class="r" style="left:585px;top:802px;width:9px;height:5px;background:#13a10e"></div>
<div class="r" style="left:648px;top:793px;width:9px;height:14px;background:#13a10e"></div>
<div class="r" style="left:657px;top:790px;width:9px;height:17px;background:#13a10e"></div>
<div class="r" style="left:693px;top:788px;width:9px;height:19px;background:#13a10e"></div>
<div class="r" style="left:702px;top:788px;width:9px;height:19px;background:#13a10e"></div>
<div class="r" style="left:711px;top:790px;width:9px;height:17px;background:#13a10e"></div>
<div class="r" style="left:720px;top:788px;width:9px;height:19px;background:#13a10e"></div>
<div class="r" style="left:729px;top:788px;width:9px;height:19px;background:#13a10e"></div>
<div class="r" style="left:738px;top:783px;width:9px;height:24px;background:#13a10e"></div>
<div class="r" style="left:747px;top:788px;width:9px;height:19px;background:#13a10e"></div>
<div class="r" style="left:756px;top:786px;width:9px;height:21px;background:#13a10e"></div>
<div class="r" style="left:765px;top:788px;width:9px;height:19px;background:#13a10e"></div>
<div class="r" style="left:774px;top:788px;width:9px;height:19px;background:#13a10e"></div>
<div class="r" style="left:783px;top:786px;width:9px;height:21px;background:#13a10e"></div>
<div class="r" style="left:792px;top:788px;width:9px;height:19px;background:#13a10e"></div>
<div class="r" style="left:801px;top:788px;width:9px;height:19px;background:#13a10e"></div>
<div class="r" style="left:810px;top:790px;width:9px;height:17px;background:#13a10e"></div>
<div class="r" style="left:819px;top:788px;width:9px;height:19px;background:#13a10e"></div>
<div class="r" style="left:828px;top:776px;width:9px;height:31px;background:#13a10e"></div>
<div class="r" style="left:837px;top:774px;width:9px;height:33px;background:#13a10e"></div>
<div class="r" style="left:846px;top:786px;width:9px;height:21px;background:#13a10e"></div>
<div class="r" style="left:855px;top:786px;width:9px;height:21px;background:#13a10e"></div>
<div class="r" style="left:864px;top:769px;width:9px;height:38px;background:#13a10e"></div>
<div class="r" style="left:873px;top:788px;width:9px;height:19px;background:#13a10e"></div>
<div class="b" style="left:13px;top:835px;width:970px;height:55px"></div>
<div class="t" style="left:18px;top:826px;height:19px;color:#cccccc;background:#0c0c0c;padding-top:1px;box-sizing:border-box">Upload (KB/s) – now: 4 | peak: 16</div>
<div class="r" style="left:27px;top:881px;width:9px;height:2px;background:#0037da"></div>
<div class="r" style="left:225px;top:881px;width:9px;height:2px;background:#0037da"></div>
<div class="r" style="left:351px;top:881px;width:9px;height:2px;background:#0037da"></div>
<div class="r" style="left:558px;top:876px;width:9px;height:7px;background:#0037da"></div>
<div class="r" style="left:576px;top:874px;width:9px;height:9px;background:#0037da"></div>
<div class="r" style="left:585px;top:878px;width:9px;height:5px;background:#0037da"></div>
<div class="r" style="left:594px;top:881px;width:9px;height:2px;background:#0037da"></div>
<div class="r" style="left:648px;top:862px;width:9px;height:21px;background:#0037da"></div>
<div class="r" style="left:657px;top:874px;width:9px;height:9px;background:#0037da"></div>
<div class="r" style="left:693px;top:876px;width:9px;height:7px;background:#0037da"></div>
<div class="r" style="left:702px;top:874px;width:9px;height:9px;background:#0037da"></div>
<div class="r" style="left:711px;top:874px;width:9px;height:9px;background:#0037da"></div>
<div class="r" style="left:720px;top:869px;width:9px;height:14px;background:#0037da"></div>
<div class="r" style="left:729px;top:866px;width:9px;height:17px;background:#0037da"></div>
<div class="r" style="left:738px;top:855px;width:9px;height:28px;background:#0037da"></div>
<div class="r" style="left:747px;top:874px;width:9px;height:9px;background:#0037da"></div>
<div class="r" style="left:756px;top:852px;width:9px;height:31px;background:#0037da"></div>
<div class="r" style="left:765px;top:871px;width:9px;height:12px;background:#0037da"></div>
<div class="r" style="left:774px;top:874px;width:9px;height:9px;background:#0037da"></div>
<div class="r" style="left:783px;top:871px;width:9px;height:12px;background:#0037da"></div>
<div class="r" style="left:792px;top:874px;width:9px;height:9px;background:#0037da"></div>
<div class="r" style="left:801px;top:874px;width:9px;height:9px;background:#0037da"></div>
<div class="r" style="left:810px;top:876px;width:9px;height:7px;background:#0037da"></div>
<div class="r" style="left:819px;top:874px;width:9px;height:9px;background:#0037da"></div>
<div class="r" style="left:828px;top:845px;width:9px;height:38px;background:#0037da"></div>
<div class="r" style="left:837px;top:862px;width:9px;height:21px;background:#0037da"></div>
<div class="r" style="left:846px;top:845px;width:9px;height:38px;background:#0037da"></div>
<div class="r" style="left:855px;top:871px;width:9px;height:12px;background:#0037da"></div>
<div class="r" style="left:864px;top:866px;width:9px;height:17px;background:#0037da"></div>
<div class="r" style="left:873px;top:874px;width:9px;height:9px;background:#0037da"></div>
<div class="b" style="left:994px;top:474px;width:493px;height:416px"></div>
<div class="t" style="left:999px;top:465px;height:19px;color:#cccccc;background:#0c0c0c;padding-top:1px;box-sizing:border-box">Top Processes (289 total)</div>
<div class="t" style="left:999px;top:485px;color:#3a96dd">PID</div>
<div class="t" style="left:1080px;top:485px;color:#3a96dd">Name</div>
<div class="t" style="left:1215px;top:485px;color:#3a96dd">CPU %</div>
<div class="t" style="left:1296px;top:485px;color:#3a96dd">Mem</div>
<div class="t" style="left:1413px;top:485px;color:#3a96dd">Mem %</div>
<div class="t" style="left:999px;top:504px;color:#767676">4516</div>
<div class="t" style="left:1080px;top:504px;color:#cccccc">audiodg.exe</div>
<div class="t" style="left:1215px;top:504px;color:#13a10e">0.1%</div>
<div class="t" style="left:1296px;top:504px;color:#cccccc">14.3MB</div>
<div class="t" style="left:1413px;top:504px;color:#0037da">0.04%</div>
<div class="t" style="left:999px;top:523px;color:#767676">17868</div>
<div class="t" style="left:1080px;top:523px;color:#cccccc">steam.exe</div>
<div class="t" style="left:1215px;top:523px;color:#13a10e">0.1%</div>
<div class="t" style="left:1296px;top:523px;color:#cccccc">73.2MB</div>
<div class="t" style="left:1413px;top:523px;color:#0037da">0.23%</div>
<div class="t" style="left:999px;top:542px;color:#767676">17544</div>
<div class="t" style="left:1080px;top:542px;color:#cccccc">Discord.exe</div>
<div class="t" style="left:1215px;top:542px;color:#13a10e">0.1%</div>
<div class="t" style="left:1296px;top:542px;color:#cccccc">322.4MB</div>
<div class="t" style="left:1413px;top:542px;color:#0037da">0.99%</div>
<div class="t" style="left:999px;top:561px;color:#767676">19008</div>
<div class="t" style="left:1080px;top:561px;color:#cccccc">WindowsTermina</div>
<div class="t" style="left:1215px;top:561px;color:#13a10e">0.1%</div>
<div class="t" style="left:1296px;top:561px;color:#cccccc">148.0MB</div>
<div class="t" style="left:1413px;top:561px;color:#0037da">0.46%</div>
<div class="t" style="left:999px;top:580px;color:#767676">13040</div>
<div class="t" style="left:1080px;top:580px;color:#cccccc">iCUE.exe</div>
<div class="t" style="left:1215px;top:580px;color:#13a10e">0.1%</div>
<div class="t" style="left:1296px;top:580px;color:#cccccc">279.0MB</div>
<div class="t" style="left:1413px;top:580px;color:#0037da">0.86%</div>
<div class="t" style="left:999px;top:599px;color:#767676">24516</div>
<div class="t" style="left:1080px;top:599px;color:#cccccc">devenv.exe</div>
<div class="t" style="left:1215px;top:599px;color:#13a10e">0.1%</div>
<div class="t" style="left:1296px;top:599px;color:#cccccc">917.5MB</div>
<div class="t" style="left:1413px;top:599px;color:#0037da">2.82%</div>
<div class="t" style="left:999px;top:618px;color:#767676">4416</div>
<div class="t" style="left:1080px;top:618px;color:#cccccc">brave.exe</div>
<div class="t" style="left:1215px;top:618px;color:#13a10e">0.0%</div>
<div class="t" style="left:1296px;top:618px;color:#cccccc">241.3MB</div>
<div class="t" style="left:1413px;top:618px;color:#0037da">0.74%</div>
<div class="t" style="left:999px;top:637px;color:#767676">17992</div>
<div class="t" style="left:1080px;top:637px;color:#cccccc">Discord.exe</div>
<div class="t" style="left:1215px;top:637px;color:#13a10e">0.0%</div>
<div class="t" style="left:1296px;top:637px;color:#cccccc">114.6MB</div>
<div class="t" style="left:1413px;top:637px;color:#0037da">0.35%</div>
<div class="t" style="left:999px;top:656px;color:#767676">22392</div>
<div class="t" style="left:1080px;top:656px;color:#cccccc">steamwebhelper</div>
<div class="t" style="left:1215px;top:656px;color:#13a10e">0.0%</div>
<div class="t" style="left:1296px;top:656px;color:#cccccc">102.5MB</div>
<div class="t" style="left:1413px;top:656px;color:#0037da">0.32%</div>
<div class="t" style="left:999px;top:675px;color:#767676">18960</div>
<div class="t" style="left:1080px;top:675px;color:#cccccc">steamwebhelper</div>
<div class="t" style="left:1215px;top:675px;color:#13a10e">0.0%</div>
<div class="t" style="left:1296px;top:675px;color:#cccccc">472.1MB</div>
<div class="t" style="left:1413px;top:675px;color:#0037da">1.45%</div>
<div class="t" style="left:999px;top:694px;color:#767676">17164</div>
<div class="t" style="left:1080px;top:694px;color:#cccccc">brave.exe</div>
<div class="t" style="left:1215px;top:694px;color:#13a10e">0.0%</div>
<div class="t" style="left:1296px;top:694px;color:#cccccc">202.7MB</div>
<div class="t" style="left:1413px;top:694px;color:#0037da">0.62%</div>
<div class="t" style="left:999px;top:713px;color:#767676">19196</div>
<div class="t" style="left:1080px;top:713px;color:#cccccc">QmlRenderer.ex</div>
<div class="t" style="left:1215px;top:713px;color:#13a10e">0.0%</div>
<div class="t" style="left:1296px;top:713px;color:#cccccc">99.4MB</div>
<div class="t" style="left:1413px;top:713px;color:#0037da">0.31%</div>
<div class="t" style="left:999px;top:732px;color:#767676">8308</div>
<div class="t" style="left:1080px;top:732px;color:#cccccc">NoiseCanceling</div>
<div class="t" style="left:1215px;top:732px;color:#13a10e">0.0%</div>
<div class="t" style="left:1296px;top:732px;color:#cccccc">4.9MB</div>
<div class="t" style="left:1413px;top:732px;color:#0037da">0.02%</div>
<div class="t" style="left:999px;top:751px;color:#767676">18192</div>
<div class="t" style="left:1080px;top:751px;color:#cccccc">Discord.exe</div>
<div class="t" style="left:1215px;top:751px;color:#13a10e">0.0%</div>
<div class="t" style="left:1296px;top:751px;color:#cccccc">137.5MB</div>
<div class="t" style="left:1413px;top:751px;color:#0037da">0.42%</div>
<div class="t" style="left:999px;top:770px;color:#767676">17508</div>
<div class="t" style="left:1080px;top:770px;color:#cccccc">steamwebhelper</div>
<div class="t" style="left:1215px;top:770px;color:#13a10e">0.0%</div>
<div class="t" style="left:1296px;top:770px;color:#cccccc">104.3MB</div>
<div class="t" style="left:1413px;top:770px;color:#0037da">0.32%</div>
<div class="t" style="left:999px;top:789px;color:#767676">8992</div>
<div class="t" style="left:1080px;top:789px;color:#cccccc">explorer.exe</div>
<div class="t" style="left:1215px;top:789px;color:#13a10e">0.0%</div>
<div class="t" style="left:1296px;top:789px;color:#cccccc">320.7MB</div>
<div class="t" style="left:1413px;top:789px;color:#0037da">0.99%</div>
<div class="t" style="left:999px;top:808px;color:#767676">8140</div>
<div class="t" style="left:1080px;top:808px;color:#cccccc">AcPowerNotific</div>
<div class="t" style="left:1215px;top:808px;color:#13a10e">0.0%</div>
<div class="t" style="left:1296px;top:808px;color:#cccccc">17.6MB</div>
<div class="t" style="left:1413px;top:808px;color:#0037da">0.05%</div>
<div class="t" style="left:999px;top:827px;color:#767676">23792</div>
<div class="t" style="left:1080px;top:827px;color:#cccccc">brave.exe</div>
<div class="t" style="left:1215px;top:827px;color:#13a10e">0.0%</div>
<div class="t" style="left:1296px;top:827px;color:#cccccc">301.4MB</div>
<div class="t" style="left:1413px;top:827px;color:#0037da">0.93%</div>
<div class="t" style="left:999px;top:846px;color:#767676">24952</div>
<div class="t" style="left:1080px;top:846px;color:#cccccc">ServiceHub.Hos</div>
<div class="t" style="left:1215px;top:846px;color:#13a10e">0.0%</div>
<div class="t" style="left:1296px;top:846px;color:#cccccc">168.2MB</div>
<div class="t" style="left:1413px;top:846px;color:#0037da">0.52%</div>
<div class="t" style="left:999px;top:865px;color:#767676">17908</div>
<div class="t" style="left:1080px;top:865px;color:#cccccc">rust–analyzer.</div>
<div class="t" style="left:1215px;top:865px;color:#13a10e">0.0%</div>
<div class="t" style="left:1296px;top:865px;color:#cccccc">2.3GB</div>
<div class="t" style="left:1413px;top:865px;color:#881798">7.28%</div>
</div>
</body></html>
